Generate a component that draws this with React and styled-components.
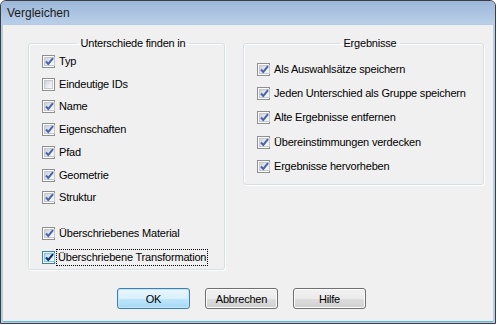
import React from "react";
import styled, { createGlobalStyle, css } from "styled-components";

const Global = createGlobalStyle`
  html, body { margin: 0; padding: 0; background: #ffffff; }
  body { font-family: "Liberation Sans", Arial, sans-serif; }
  * { box-sizing: border-box; }
`;

const Window = styled.div`
  width: 496px;
  height: 324px;
  border: 1px solid #3a3d42;
  border-radius: 6px 6px 0 0;
  background: #b7cde6;
  display: flex;
  flex-direction: column;
  overflow: hidden;
`;

const TitleBar = styled.div`
  height: 24px;
  flex: none;
  display: flex;
  align-items: center;
  padding: 1px 0 0 6px;
  background: linear-gradient(#9db7d8, #b9cfe9);
  color: #1a1a1a;
  font-size: 12px;
  border-bottom: 1px solid #b4cbe6;
`;

const Client = styled.div`
  flex: 1;
  margin: 0 2px 1px 2px;
  background: #f0f0f0;
  border-bottom: 1px solid #5db3e2;
  display: flex;
  flex-direction: column;
  padding: 11px 0 0 25px;
  font-size: 11px;
  letter-spacing: -0.2px;
  color: #000;
`;

const Groups = styled.div`
  display: flex;
  align-items: flex-start;
  gap: 18px;
`;

const Group = styled.fieldset`
  margin: 0;
  width: ${(p) => p.$w}px;
  height: ${(p) => p.$h}px;
  padding: ${(p) => p.$pt}px 0 0 13px;
  border: 1px solid #d5dfe5;
  border-radius: 3px;
  box-shadow: inset 1px 1px 0 #fff, 1px 1px 0 #fff;
  min-width: 0;
`;

const Legend = styled.legend`
  margin: 0 auto;
  padding: 0 3px;
  line-height: 14px;
  font-size: 11px;
`;

const Row = styled.div`
  height: ${(p) => p.$h}px;
  display: flex;
  align-items: center;
  margin-top: ${(p) => p.$gap || 0}px;
`;

const Box = styled.span`
  width: 13px;
  height: 13px;
  flex: none;
  border: 1px solid #8e8f8f;
  background: #fff;
  padding: 1px;
  display: flex;
  ${(p) =>
    p.$hot &&
    css`
      border-color: #3c7fb1;
    `}
`;

const BoxInner = styled.span`
  flex: 1;
  display: flex;
  align-items: center;
  justify-content: center;
  background: linear-gradient(135deg, #cdd1d6 0%, #eceef0 60%, #f7f7f7 100%);
  border: 1px solid #c5c9cf;
  ${(p) =>
    p.$hot &&
    css`
      background: linear-gradient(135deg, #b5dcf6 0%, #e2f3fd 60%, #eff9fe 100%);
      border-color: #79c6f9;
    `}
`;

const Label = styled.span`
  margin-left: 3px;
  padding: 1px 1px 2px 1px;
  white-space: nowrap;
  ${(p) =>
    p.$focus &&
    css`
      margin-left: 2px;
      outline: 1px dotted #000;
      outline-offset: 0;
    `}
`;

const Buttons = styled.div`
  display: flex;
  gap: 15px;
  margin-top: 18px;
  padding-left: 89px;
`;

const Button = styled.button`
  width: 73px;
  height: 21px;
  padding: 0;
  font-family: "Liberation Sans", Arial, sans-serif;
  font-size: 11px;
  letter-spacing: -0.2px;
  color: #000;
  border-radius: 3px;
  border: 1px solid #707070;
  background: linear-gradient(#f2f2f2 0%, #ebebeb 50%, #dddddd 51%, #cfcfcf 100%);
  box-shadow: inset 0 0 0 1px #fcfcfc;
  ${(p) =>
    p.$default &&
    css`
      border-color: #3c7fb1;
      background: linear-gradient(#eaf6fd 0%, #d9f0fc 50%, #bee6fd 51%, #a7d9f5 100%);
      box-shadow: inset 0 0 0 1px #c6e6f8;
    `}
`;

const Check = ({ checked = true, hot }) => (
  <Box $hot={hot}>
    <BoxInner $hot={hot}>
      {checked && (
        <svg width="9" height="9" viewBox="0 0 9 9">
          <path
            d="M1 4.5 L3.3 7 L8 1.2"
            fill="none"
            stroke={hot ? "#0f2a6e" : "#4a64ad"}
            strokeWidth="2"
          />
        </svg>
      )}
    </BoxInner>
  </Box>
);

const Item = ({ label, checked, h, gap, hot, focus }) => (
  <Row $h={h} $gap={gap}>
    <Check checked={checked} hot={hot} />
    <Label $focus={focus}>{label}</Label>
  </Row>
);

const leftItems = [
  { label: "Typ" },
  { label: "Eindeutige IDs", checked: false },
  { label: "Name" },
  { label: "Eigenschaften" },
  { label: "Pfad" },
  { label: "Geometrie" },
  { label: "Struktur" },
];

const rightItems = [
  "Als Auswahlsätze speichern",
  "Jeden Unterschied als Gruppe speichern",
  "Alte Ergebnisse entfernen",
  "Übereinstimmungen verdecken",
  "Ergebnisse hervorheben",
];

export default function App() {
  return (
    <>
      <Global />
      <Window>
        <TitleBar>Vergleichen</TitleBar>
        <Client>
          <Groups>
            <Group $w={197} $h={234} $pt={0}>
              <Legend>Unterschiede finden in</Legend>
              {leftItems.map((it) => (
                <Item key={it.label} label={it.label} checked={it.checked !== false} h={22.75} />
              ))}
              <Item label="Überschriebenes Material" h={23} gap={13} />
              <Item label="Überschriebene Transformation" h={24} hot focus />
            </Group>
            <Group $w={241} $h={149} $pt={7}>
              <Legend>Ergebnisse</Legend>
              {rightItems.map((l) => (
                <Item key={l} label={l} h={24.4} />
              ))}
            </Group>
          </Groups>
          <Buttons>
            <Button $default>OK</Button>
            <Button>Abbrechen</Button>
            <Button>Hilfe</Button>
          </Buttons>
        </Client>
      </Window>
    </>
  );
}
